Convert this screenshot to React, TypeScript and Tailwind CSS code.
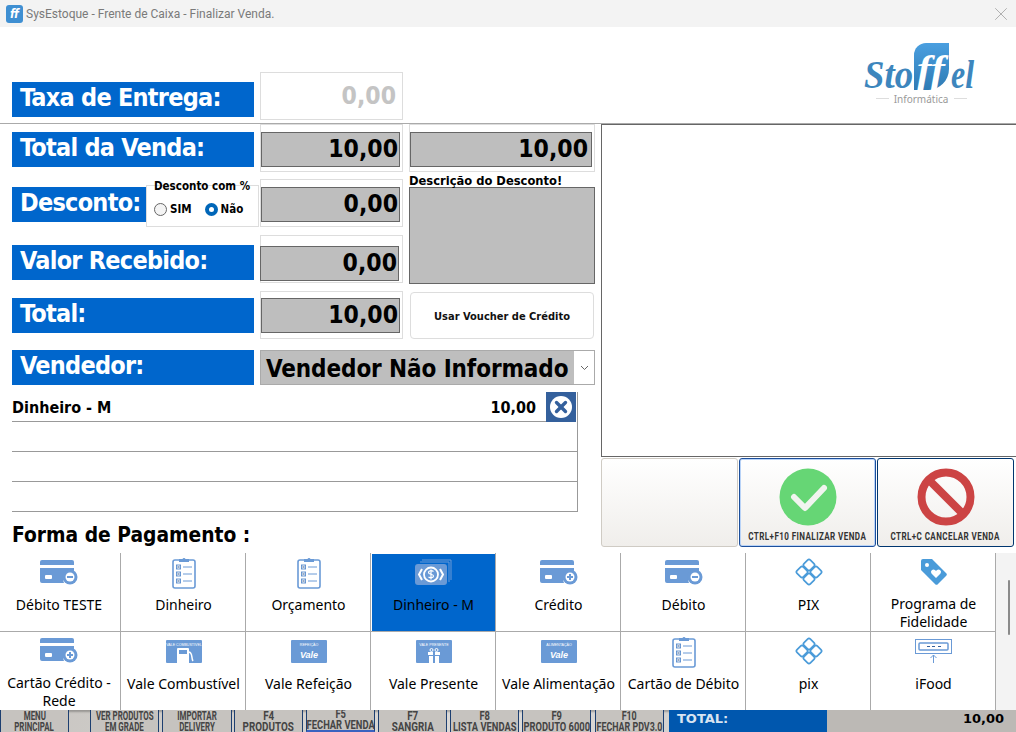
import { X } from "lucide-react";
import type { ReactNode } from "react";

const blue = "#6a9ad6";

function CardIcon({ plus }: { plus?: boolean }) {
  return (
    <svg width="38" height="25" viewBox="0 0 38 25">
      <path d="M2 0h30a2 2 0 0 1 2 2v3H0V2a2 2 0 0 1 2-2z" fill={blue} />
      <path d="M0 8h34v3a9 9 0 0 0-10 12H2a2 2 0 0 1-2-2z" fill={blue} />
      <rect x="5" y="15" width="7" height="4" rx="1" fill="#fff" />
      <circle cx="30" cy="17" r="7.500" fill={blue} />
      <circle cx="30" cy="17" r="4.500" fill="#fff" />
      <rect x="27" y="16" width="6" height="2" fill={blue} />
      {plus && <rect x="29" y="14" width="2" height="6" fill={blue} />}
    </svg>
  );
}

function ClipIcon() {
  return (
    <svg width="24" height="33" viewBox="0 0 24 33">
      <rect x="1" y="4" width="22" height="28" rx="2" fill="#fff" stroke={blue} strokeWidth="1.6" />
      <path d="M7 5V3h3.500a1.600 1.600 0 0 1 3 0H17v3H7z" fill={blue} />
      {[11, 18, 25].map((y) => (
        <g key={y}>
          <rect x="4.500" y={y - 2} width="4" height="4" fill="none" stroke={blue} strokeWidth="1" />
          <path d={`M5 ${y - 1.5}l3 3M8 ${y - 1.5}l-3 3`} stroke="#4a6d9c" strokeWidth=".7" />
          <path d={`M11 ${y}h9`} stroke={blue} strokeWidth="1" />
        </g>
      ))}
    </svg>
  );
}

function MoneyIcon() {
  return (
    <svg width="38" height="27" viewBox="0 0 38 27">
      <path d="M7 1h29v20M5 3h29v20" fill="none" stroke={blue} strokeWidth="1" />
      <rect x="0" y="5" width="32" height="21" rx="3" fill={blue} />
      <path d="M7 10l-3 5.500 3 5.500M25 10l3 5.500-3 5.500" fill="none" stroke="#fff" strokeWidth="2" />
      <circle cx="16" cy="15.500" r="7" fill="none" stroke="#fff" strokeWidth="1.800" />
      <path d="M18.500 12.500c-2-1.500-5-.8-5 1 0 2.500 5 1 5 3.500 0 1.800-3 2.300-5 1M16 10.500v10" fill="none" stroke="#fff" strokeWidth="1.200" />
    </svg>
  );
}

function PixIcon() {
  return (
    <svg width="28" height="28" viewBox="0 0 28 28" fill="none" stroke="#4a9bd9" strokeWidth="1.700">
      <rect x="9.500" y="2.500" width="9" height="9" rx="2" transform="rotate(45 14 7)" />
      <rect x="9.500" y="16.500" width="9" height="9" rx="2" transform="rotate(45 14 21)" />
      <rect x="2.500" y="9.500" width="9" height="9" rx="2" transform="rotate(45 7 14)" />
      <rect x="16.500" y="9.500" width="9" height="9" rx="2" transform="rotate(45 21 14)" />
    </svg>
  );
}

function TagIcon() {
  return (
    <svg width="26" height="26" viewBox="0 0 26 26">
      <path d="M2 0h9l14 14a2 2 0 0 1 0 3l-8 8a2 2 0 0 1-3 0L0 11V2a2 2 0 0 1 2-2z" fill="#4a9bd9" />
      <circle cx="6" cy="6" r="2" fill="#fff" />
      <path d="M15 19l-4.500-4.500a2.500 2.500 0 0 1 3.500-3.500l1 1 1-1a2.500 2.500 0 0 1 3.500 3.500z" fill="#fff" />
    </svg>
  );
}

function ValeIcon({ top, kind }: { top: string; kind: "vale" | "fuel" | "gift" }) {
  return (
    <svg width="36" height="23" viewBox="0 0 36 23">
      <rect width="36" height="23" rx="1" fill={blue} />
      <text x="18" y="6" textAnchor="middle" fontSize="3.600" fill="#fff" fontFamily="Liberation Sans">
        {top}
      </text>
      {kind === "vale" && (
        <text x="18" y="18" textAnchor="middle" fontSize="9" fontWeight="700" fontStyle="italic" fill="#fff" fontFamily="Liberation Sans">
          Vale
        </text>
      )}
      {kind === "fuel" && (
        <g>
          <path d="M12 8h10a1 1 0 0 1 1 1v14H11V9a1 1 0 0 1 1-1z" fill="#fff" />
          <rect x="13" y="10" width="8" height="4" fill={blue} />
          <path d="M23 12c4 1 2 6 4 9" fill="none" stroke="#fff" strokeWidth="1.500" />
        </g>
      )}
      {kind === "gift" && (
        <g fill="#fff">
          <rect x="12" y="12" width="12" height="3" />
          <rect x="13" y="16" width="10" height="7" />
          <rect x="17" y="12" width="2" height="11" fill={blue} />
          <circle cx="15.500" cy="10" r="1.500" fill="none" stroke="#fff" />
          <circle cx="20.500" cy="10" r="1.500" fill="none" stroke="#fff" />
        </g>
      )}
    </svg>
  );
}

function FoodIcon() {
  return (
    <svg width="37" height="25" viewBox="0 0 37 25" fill="none" stroke={blue}>
      <rect x=".5" y=".5" width="36" height="14" strokeWidth="1" />
      <rect x="4" y="4" width="29" height="7" rx="1" strokeWidth="1.500" />
      <path d="M12 7.500h3M17 7.500h3M23 7.500h3" stroke="#34609c" />
      <path d="M18.500 24V16M15.500 19l3-3 3 3" strokeWidth="1" />
    </svg>
  );
}

type Pay = { label: string; icon: ReactNode; selected?: boolean };

const row1: Pay[] = [
  { label: "Débito TESTE", icon: <CardIcon /> },
  { label: "Dinheiro", icon: <ClipIcon /> },
  { label: "Orçamento", icon: <ClipIcon /> },
  { label: "Dinheiro - M", icon: <MoneyIcon />, selected: true },
  { label: "Crédito", icon: <CardIcon plus /> },
  { label: "Débito", icon: <CardIcon /> },
  { label: "PIX", icon: <PixIcon /> },
  { label: "Programa de Fidelidade", icon: <TagIcon /> },
];

const row2: Pay[] = [
  { label: "Cartão Crédito - Rede", icon: <CardIcon plus /> },
  { label: "Vale Combustível", icon: <ValeIcon top="VALE COMBUSTÍVEL" kind="fuel" /> },
  { label: "Vale Refeição", icon: <ValeIcon top="REFEIÇÃO" kind="vale" /> },
  { label: "Vale Presente", icon: <ValeIcon top="VALE PRESENTE" kind="gift" /> },
  { label: "Vale Alimentação", icon: <ValeIcon top="ALIMENTAÇÃO" kind="vale" /> },
  { label: "Cartão de Débito", icon: <ClipIcon /> },
  { label: "pix", icon: <PixIcon /> },
  { label: "iFood", icon: <FoodIcon /> },
];

const bottomButtons = [
  { top: "MENU", bottom: "PRINCIPAL", w: "w-[69px]", ml: "ml-0", squeeze: "scale-x-[0.66]" },
  { top: "VER PRODUTOS", bottom: "EM GRADE", w: "w-[69px]", ml: "ml-[21px]", squeeze: "scale-x-[0.66]" },
  { top: "IMPORTAR", bottom: "DELIVERY", w: "w-[70px]", ml: "ml-[3px]", squeeze: "scale-x-[0.66]" },
  { top: "F4", bottom: "PRODUTOS", w: "w-[69px]", ml: "ml-[2px]", squeeze: "scale-x-[0.82]" },
  { top: "F5", bottom: "FECHAR VENDA", w: "w-[69px]", ml: "ml-[3px]", active: true, squeeze: "scale-x-[0.78]" },
  { top: "F7", bottom: "SANGRIA", w: "w-[69px]", ml: "ml-[3px]", squeeze: "scale-x-[0.82]" },
  { top: "F8", bottom: "LISTA VENDAS", w: "w-[69px]", ml: "ml-[3px]", squeeze: "scale-x-[0.78]" },
  { top: "F9", bottom: "PRODUTO 6000", w: "w-[69px]", ml: "ml-[3px]", squeeze: "scale-x-[0.78]" },
  { top: "F10", bottom: "FECHAR PDV3.0", w: "w-[69px]", ml: "ml-[4px]", squeeze: "scale-x-[0.74]" },
];

function Label({ children }: { children: ReactNode }) {
  return (
    <div className="h-[35px] w-[242px] whitespace-nowrap bg-[#0066cc] pl-[8px] text-[25px] leading-[31px] font-bold tracking-[-0.75px] text-white">
      {children}
    </div>
  );
}

function Value({ children, pr = "pr-[1px]" }: { children: ReactNode; pr?: string }) {
  return (
    <div className={`flex h-[35px] items-center justify-end border border-[#666] bg-[#bebebe] text-[24.500px] font-bold text-black ${pr}`}>
      {children}
    </div>
  );
}

function Field({ children, pt = "pt-[7px]" }: { children: ReactNode; pt?: string }) {
  return <div className={`h-[48px] w-[143px] border border-[#ddd] pr-[2px] ${pt}`}>{children}</div>;
}

function PayCell({ label, icon, selected, first }: Pay & { first?: boolean }) {
  return (
    <div className={`h-full overflow-hidden border-r border-[#aaa] pl-[1px] pt-[1px] ${first ? "pr-[3px]" : ""}`}>
      <div className={`flex h-full flex-col items-center ${selected ? "bg-[#0066cc]" : ""}`}>
        <div className="flex h-[36px] w-full items-center justify-center">{icon}</div>
        <div className="mt-[6px] w-full px-[2px] text-center font-['Noto_Sans',sans-serif] text-[14px] leading-[18px] text-black">
          {label}
        </div>
      </div>
    </div>
  );
}

export default function App() {
  return (
    <div className="relative h-[732px] w-[1016px] overflow-hidden bg-white font-['DejaVu_Sans_Condensed','DejaVu_Sans',sans-serif]">
      {/* Title bar */}
      <div className="flex h-[27px] items-center bg-[#f3f3f3] pl-[6px] pr-[4px]">
        <div className="flex h-[18px] w-[17px] items-center justify-center rounded-[3px] bg-[#3f8fd2] text-[12px] font-bold italic leading-none text-white">
          ff
        </div>
        <span className="ml-[3px] font-['Roboto',sans-serif] text-[12px] text-[#7a7a7a]">
          SysEstoque - Frente de Caixa - Finalizar Venda.
        </span>
        <X className="ml-auto text-[#8a8a8a]" size={22} strokeWidth={0.7} />
      </div>

      {/* Taxa de entrega + logo */}
      <div className="flex h-[97px] border-b border-[#aaa] pl-[12px]">
        <div className="mt-[55px]">
          <Label>Taxa de Entrega:</Label>
        </div>
        <div className="ml-[6px] mt-[45px] flex h-[48px] w-[143px] items-center justify-end border border-[#ddd] pr-[6px] text-[24.500px] font-bold text-[#c4c4c4]">
          0,00
        </div>
        <svg className="ml-auto mr-[40px] mt-[16px]" width="112" height="64" viewBox="0 0 112 64">
          <defs>
            <linearGradient id="logoShape" x1="0" y1="0" x2="0" y2="1">
              <stop offset="0" stopColor="#4a9fe0" />
              <stop offset="1" stopColor="#2f7bb4" />
            </linearGradient>
          </defs>
          <path d="M50 12a12 12 0 0 1 12-12h23v26a21 21 0 0 1-21 21H50z" fill="url(#logoShape)" />
          <text x="0" y="45" fontSize="40" textLength="49" lengthAdjust="spacingAndGlyphs" fontWeight="700" fontStyle="italic" fill="#3d86bd" fontFamily="Liberation Serif">
            Sto
          </text>
          <text x="53" y="40" fontSize="40" textLength="28" lengthAdjust="spacingAndGlyphs" fontWeight="700" fontStyle="italic" fill="#fff" fontFamily="Liberation Serif">
            ff
          </text>
          <text x="87" y="45" fontSize="40" textLength="23" lengthAdjust="spacingAndGlyphs" fontWeight="700" fontStyle="italic" fill="#3d86bd" fontFamily="Liberation Serif">
            el
          </text>
          <text x="57" y="60" fontSize="10" textAnchor="middle" fill="#9a9a9a" fontFamily="Noto Sans">
            Informática
          </text>
          <path d="M12 55.500h13M90 55.500h13" stroke="#ddd" strokeWidth="1" />
        </svg>
      </div>

      <div className="flex h-[429px]">
        {/* Left column */}
        <div className="w-[601px]">
          <div className="flex">
            <div className="relative w-[408px] pl-[12px]">
              <div className="flex items-start">
                <div className="pt-[8px]">
                  <Label>Total da Venda:</Label>
                </div>
                <div className="ml-[6px]">
                  <Field>
                    <Value>10,00</Value>
                  </Field>
                </div>
              </div>
              <div className="mt-[7px] flex items-start">
                <div className="pt-[8px]">
                  <Label>Desconto:</Label>
                </div>
                <div className="ml-[6px]">
                  <Field>
                    <Value>0,00</Value>
                  </Field>
                </div>
              </div>
              <div className="mt-[8px] flex items-start">
                <div className="pt-[10px]">
                  <Label>Valor Recebido:</Label>
                </div>
                <div className="ml-[6px]">
                  <Field pt="pt-[10px]">
                    <div className="-ml-[1px] mr-[1px]">
                      <Value>0,00</Value>
                    </div>
                  </Field>
                </div>
              </div>
              <div className="mt-[8px] flex items-start">
                <div className="pt-[7px]">
                  <Label>Total:</Label>
                </div>
                <div className="ml-[6px]">
                  <Field pt="pt-[6px]">
                    <Value>10,00</Value>
                  </Field>
                </div>
              </div>

              {/* Desconto com % overlays the label */}
              <div className="absolute left-[146px] top-[61px] h-[42px] w-[113px] border border-[#ddd] bg-white pl-[7px] text-[11.500px] font-semibold leading-[13px] text-black">
                <div className="mt-[-6px]">Desconto com %</div>
                <div className="mt-[10px] flex items-center">
                  <span className="h-[13px] w-[13px] rounded-full border border-[#666] bg-[#f4f4f4]" />
                  <span className="ml-[3px]">SIM</span>
                  <span className="ml-[13px] flex h-[13px] w-[13px] items-center justify-center rounded-full bg-[#0066b8]">
                    <span className="h-[5px] w-[5px] rounded-full bg-white" />
                  </span>
                  <span className="ml-[3px]">Não</span>
                </div>
              </div>
            </div>

            <div className="w-[187px]">
              <div className="ml-[1px] h-[48px] border border-[#ddd] pr-[2px] pt-[7px]">
                <Value pr="pr-[3px]">10,00</Value>
              </div>
              <div className="ml-[1px] h-[15px] whitespace-nowrap pt-[1px] text-[12.800px] font-bold leading-[15px] text-black">
                Descrição do Desconto!
              </div>
              <div className="ml-[1px] h-[97px] border border-[#666] bg-[#bebebe]" />
              <div className="ml-[2px] mt-[8px] flex h-[47px] w-[184px] items-center justify-center rounded-[4px] border border-[#ddd] pt-[3px] text-[11px] font-bold text-[#111]">
                Usar Voucher de Crédito
              </div>
            </div>
          </div>

          {/* Vendedor */}
          <div className="mt-[11px] flex pl-[12px]">
            <Label>Vendedor:</Label>
            <div className="ml-[6px] flex h-[35px] w-[335px] border border-[#aaa]">
              <div className="flex flex-1 items-center whitespace-nowrap bg-[#bebebe] pl-[5px] pt-[2px] text-[24px] font-bold tracking-[-0.1px] text-black">
                Vendedor Não Informado
              </div>
              <div className="flex w-[20px] items-center justify-center">
                <svg width="9" height="6" viewBox="0 0 9 6" fill="none" stroke="#666">
                  <path d="M1 1l3.500 3.500L8 1" />
                </svg>
              </div>
            </div>
          </div>

          {/* Lista de pagamentos */}
          <div className="ml-[12px] mt-[7px] w-[566px] border-r border-[#999]">
            <div className="flex h-[30px]">
              <div className="flex flex-1 items-center justify-between border-b border-[#999] pr-[10px] pt-[2px] text-[16px] font-semibold text-black">
                <span>Dinheiro - M</span>
                <span>10,00</span>
              </div>
              <div className="mr-[1px] flex h-[30px] w-[30px] items-center justify-center bg-[#34609c]">
                <div className="flex h-[22px] w-[22px] items-center justify-center rounded-full bg-white">
                  <X size={18} strokeWidth={4.500} className="text-[#34609c]" />
                </div>
              </div>
            </div>
            <div className="h-[30px] border-b border-[#999]" />
            <div className="h-[30px] border-b border-[#999]" />
            <div className="h-[30px] border-b border-[#999]" />
          </div>

          <div className="ml-[12px] mt-[9px] text-[20.800px] font-bold leading-[28px] text-black">Forma de Pagamento :</div>
        </div>

        {/* Right column */}
        <div className="flex-1">
          <div className="h-[333px] border-y border-l border-[#666]" />
          <div className="mt-[1px] flex h-[89px] gap-[1px] pr-[2px]">
            <div className="w-[137px] rounded-[3px] border border-[#cfcbc4] bg-gradient-to-b from-white to-[#f0eeeb]" />
            <div className="flex w-[137px] flex-col items-center rounded-[3px] border border-[#1c4f9c] bg-gradient-to-b from-white to-[#f0eeeb] shadow-[inset_0_0_0_1px_#b9d3f7]">
              <svg className="mt-[9px]" width="58" height="58" viewBox="0 0 58 58">
                <circle cx="29" cy="29" r="28.500" fill="#66d675" />
                <path d="M15 29l11 11 19-20" fill="none" stroke="#f1f4ef" strokeWidth="6" strokeLinecap="round" strokeLinejoin="round" />
              </svg>
              <div className="mt-[2px] scale-x-[0.7] whitespace-nowrap font-['Roboto',sans-serif] text-[11.500px] font-bold tracking-[0.6px] text-[#333]">
                CTRL+F10 FINALIZAR VENDA
              </div>
            </div>
            <div className="flex w-[137px] flex-col items-center rounded-[3px] border border-[#00366f] bg-gradient-to-b from-white to-[#f0eeeb]">
              <svg className="mt-[9px]" width="58" height="58" viewBox="0 0 58 58">
                <circle cx="29" cy="29" r="24.500" fill="none" stroke="#cc4444" strokeWidth="8" />
                <path d="M12 12l34 34" stroke="#cc4444" strokeWidth="8" />
              </svg>
              <div className="mt-[2px] scale-x-[0.7] whitespace-nowrap font-['Roboto',sans-serif] text-[11.500px] font-bold tracking-[0.6px] text-[#333]">
                CTRL+C CANCELAR VENDA
              </div>
            </div>
          </div>
        </div>
      </div>

      {/* Formas de pagamento */}
      <div className="flex h-[157px]">
        <div className="w-[996px]">
          <div className="grid h-[79px] grid-cols-[121px_repeat(7,125px)] border-b border-[#aaa]">
            {row1.map((it, i) => (
              <PayCell key={it.label} {...it} first={i === 0} />
            ))}
          </div>
          <div className="grid h-[78px] grid-cols-[121px_repeat(7,125px)]">
            {row2.map((it, i) => (
              <PayCell key={it.label} {...it} first={i === 0} />
            ))}
          </div>
        </div>
        <div className="flex flex-1 justify-end bg-[#f3f3f3] pr-[6px]">
          <div className="mt-[27px] h-[55px] w-[2px] rounded bg-[#8a8a8a]" />
        </div>
      </div>

      {/* Barra inferior atrás da janela */}
      <div className="flex h-[22px] bg-gradient-to-r from-[#c8c5c1] via-[#dcdad8] to-[#c4c1bd] font-['Roboto',sans-serif] shadow-[inset_0_2px_2px_rgba(0,0,0,0.25)]">
        {bottomButtons.map((b) => (
          <div
            key={b.top}
            className={`${b.w} ${b.ml} flex h-[22px] flex-col items-center justify-end overflow-hidden border-x border-[#1d3f70] bg-[#c6c3bf] text-[12px] font-bold leading-[10.500px] text-[#444] ${b.active ? "border-b-2 border-b-[#3a62c0]" : ""}`}
          >
            <span className={`${b.squeeze} whitespace-nowrap`}>{b.top}</span>
            <span className={`${b.squeeze} whitespace-nowrap`}>{b.bottom}</span>
          </div>
        ))}
        <div className="ml-[5px] flex h-[22px] flex-1 font-['DejaVu_Sans',sans-serif] text-[13px] font-bold">
          <div className="w-[158px] bg-[#0057ae] pl-[8px] leading-[17px] text-[#d8e4f2]">TOTAL:</div>
          <div className="flex-1 bg-[#bcb9b5] pr-[12px] text-right leading-[17px] text-black">10,00</div>
        </div>
      </div>
    </div>
  );
}
